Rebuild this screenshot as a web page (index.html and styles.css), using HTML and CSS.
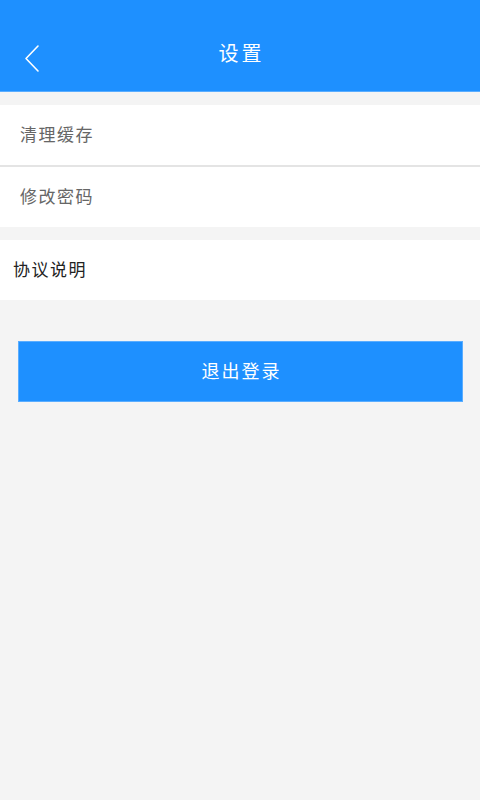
FILE: index.html
```html
<!DOCTYPE html>
<html lang="zh">
<head>
<meta charset="utf-8">
<title>设置</title>
<link rel="stylesheet" href="styles.css">
</head>
<body>
<header class="topbar">
  <svg class="back" width="20" height="30" viewBox="0 0 20 30">
    <polyline points="14,2 2,14.5 14,27" fill="none" stroke="#fff" stroke-width="1.6" stroke-linecap="round" stroke-linejoin="round"/>
  </svg>
  <h1 class="title">设置</h1>
</header>
<section class="group first">
  <div class="row muted">清理缓存</div>
  <div class="divider"></div>
  <div class="row muted">修改密码</div>
</section>
<section class="group">
  <div class="row dark">协议说明</div>
</section>
<div class="actions">
  <button class="logout">退出登录</button>
</div>
</body>
</html>
```
FILE: styles.css
```css
html, body {
  margin: 0;
  padding: 0;
  background: #f4f4f4;
  font-family: "Noto Sans CJK SC", "Noto Sans", sans-serif;
  width: 480px;
  height: 800px;
}
.topbar {
  position: relative;
  height: 91px;
  background: #1e90ff;
  border-bottom: 1px solid #5aadff;
  display: flex;
  align-items: center;
  justify-content: center;
}
.back {
  position: absolute;
  left: 24px;
  top: 44px;
}
.title {
  margin: 0;
  margin-top: 14px;
  padding-left: 3px;
  color: #fff;
  font-size: 20px;
  font-weight: normal;
  letter-spacing: 3px;
  line-height: 24px;
}
.group {
  background: #fff;
  margin-top: 13px;
}
.row {
  height: 60px;
  box-sizing: border-box;
  padding-bottom: 3px;
  display: flex;
  align-items: center;
  font-size: 17px;
  letter-spacing: 1.5px;
}
.muted {
  color: #666;
  padding-left: 20px;
}
.dark {
  color: #222;
  padding-left: 13px;
}
.divider {
  height: 2px;
  background: #e4e4e4;
}
.actions {
  padding: 41px 17px 0 18px;
}
.logout {
  display: block;
  width: 100%;
  height: 61px;
  border: 1px solid #5aadff;
  background: #1e90ff;
  color: #fff;
  font-family: inherit;
  font-size: 18px;
  letter-spacing: 2px;
  padding: 0 0 3px 2px;
}
```
